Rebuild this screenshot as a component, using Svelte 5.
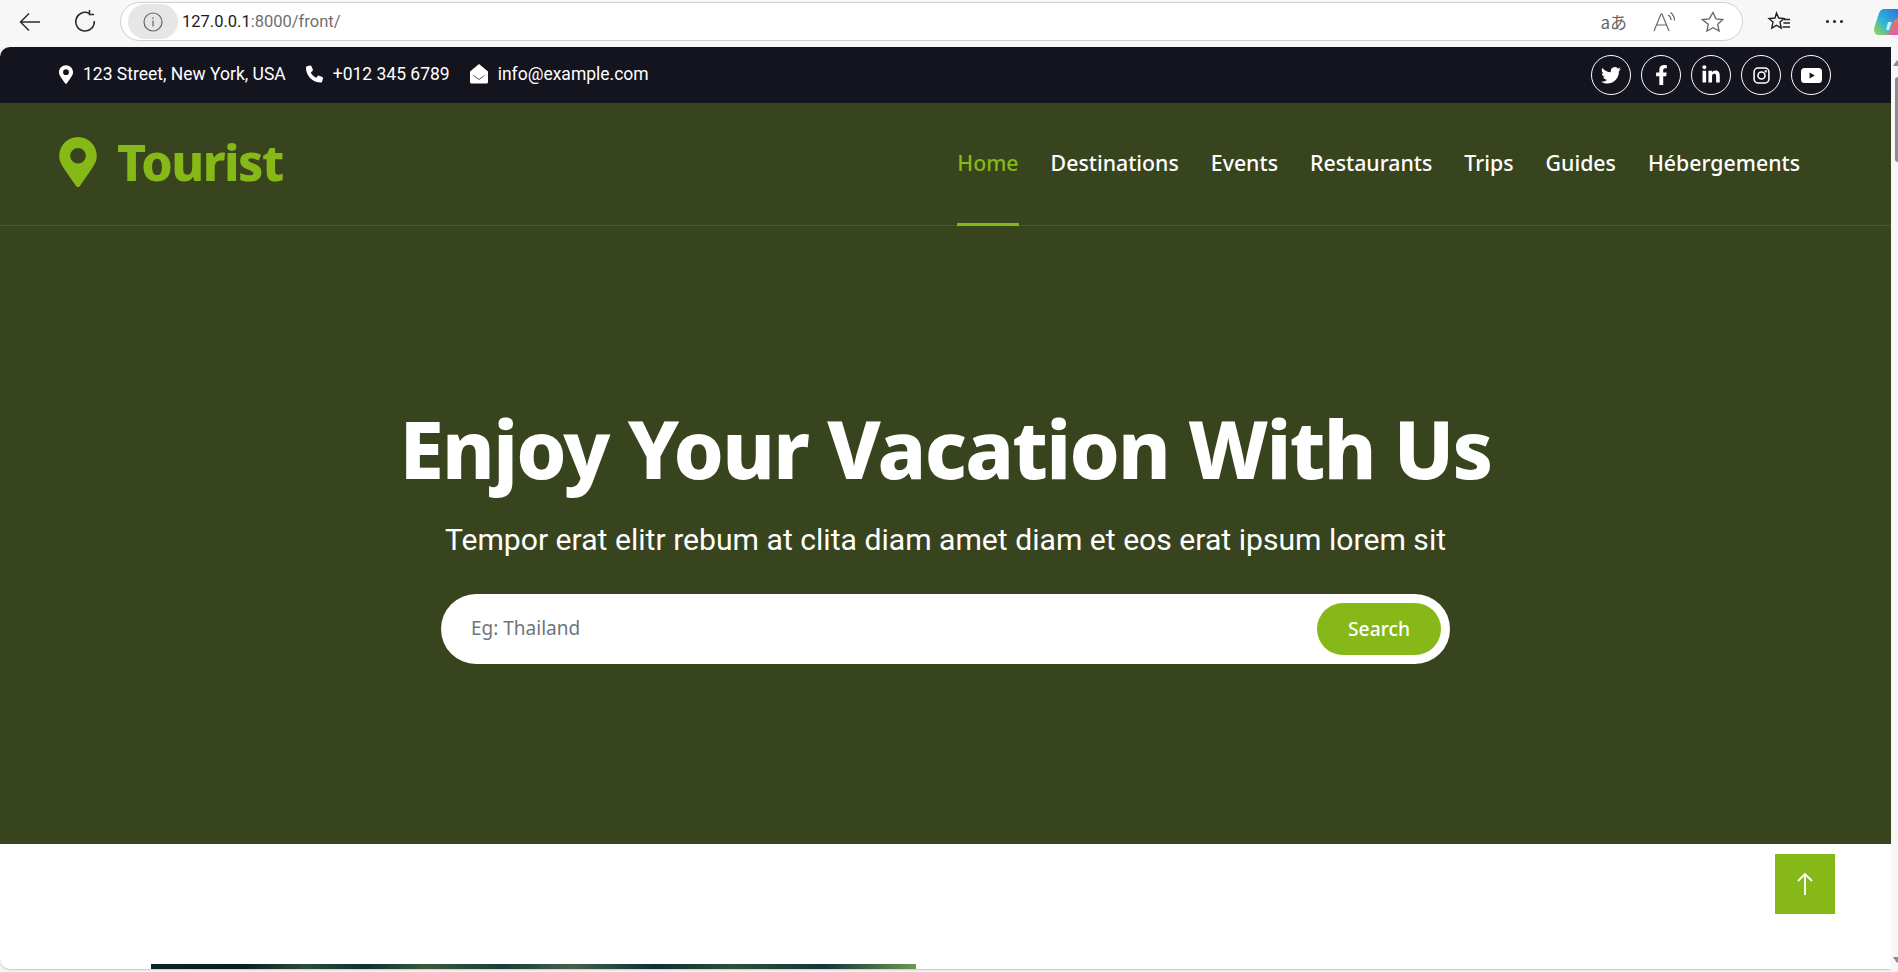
<script>
  const contact = [
    { icon: 'pin', text: '123 Street, New York, USA' },
    { icon: 'phone', text: '+012 345 6789' },
    { icon: 'mail', text: 'info@example.com' },
  ];
  const socials = ['twitter', 'facebook', 'linkedin', 'instagram', 'youtube'];
  const links = ['Home', 'Destinations', 'Events', 'Restaurants', 'Trips', 'Guides', 'Hébergements'];
</script>

<div class="window">
  <header class="chrome">
    <button class="tool back" aria-label="Back">
      <svg viewBox="0 0 24 24" width="24" height="24" fill="none" stroke="#2b2b2b" stroke-width="1.5"><path d="M22 12H3M11 3.500 2.500 12l8.500 8.500" /></svg>
    </button>
    <button class="tool reload" aria-label="Reload">
      <svg viewBox="0 0 24 24" width="24" height="24" fill="none" stroke="#2b2b2b" stroke-width="1.500"><path d="M16 3.300A9.300 9.300 0 1 0 21.300 11M16.500 0v4.500H21" /></svg>
    </button>
    <div class="address">
      <span class="site-info">
        <svg viewBox="0 0 20 20" width="20" height="20" fill="none" stroke="#666" stroke-width="1.200"><circle cx="10" cy="10" r="9" /><path d="M10 8.500v6M10 5.500v1.500" /></svg>
      </span>
      <span class="url"><span class="host">127.0.0.1</span>:8000/front/</span>
      <span class="addr-icons">
        <span class="translate">aあ</span>
        <svg viewBox="0 0 24 24" width="24" height="24" fill="none" stroke="#666" stroke-width="1.200"><path d="M2 21 9 4h1l7 17M5 15h9M16 5c2 1 3 3 3 5M18.500 2.500c2.500 2 4 4.500 4 8" /></svg>
        <svg viewBox="0 0 24 24" width="24" height="24" fill="none" stroke="#666" stroke-width="1.300"><path d="m12 2.500 2.900 6.300 6.900.8-5.100 4.700 1.400 6.800-6.100-3.400-6.100 3.400 1.400-6.800L1.300 9.600l6.900-.8z" /></svg>
      </span>
    </div>
    <div class="chrome-right">
      <svg viewBox="0 0 24 24" width="24" height="24" fill="none" stroke="#222" stroke-width="1.400"><path d="m9.500 3 2.200 5 5.300.5-4 3.600 1.200 5.900-4.700-2.700-4.700 2.700 1.200-5.900-4-3.600L8 8zM17 9.500h6M16.500 13H23M15.500 17H23" /></svg>
      <span class="dots"><i></i><i></i><i></i></span>
      <svg class="copilot" viewBox="0 0 24 26" width="24" height="26">
        <defs>
          <linearGradient id="cop-a" x1="0" y1="1" x2="1" y2="0"><stop offset="0" stop-color="#a6d63f" /><stop offset=".45" stop-color="#2fb6d8" /><stop offset="1" stop-color="#2f6fe0" /></linearGradient>
          <linearGradient id="cop-b" x1="0" y1="0" x2="1" y2="1"><stop offset="0" stop-color="#f6c344" /><stop offset=".5" stop-color="#f0705c" /><stop offset="1" stop-color="#d45cc8" /></linearGradient>
        </defs>
        <path d="M10 0h14v26H5c-4 0-6-4-4.500-8L5 4c1-2.500 3-4 5-4z" fill="url(#cop-a)" />
        <path d="M24 9v17H9c4 0 6-1.500 7-4l3-8c1-3 3-5 5-5z" fill="url(#cop-b)" />
        <path d="M14 13h4l-3 8h-3z" fill="#fff" opacity=".75" />
      </svg>
    </div>
  </header>

  <div class="viewport">
    <main class="page">
      <div class="topbar">
        <ul class="contact">
          {#each contact as c}
            <li>
              {#if c.icon === 'pin'}
                <svg viewBox="0 0 384 512" width="14" height="19" fill="#fff"><path d="M172 502C27 291 0 263 0 192 0 86 86 0 192 0s192 86 192 192c0 71-27 99-172 310-10 14-30 14-40 0zm20-230a80 80 0 1 0 0-160 80 80 0 0 0 0 160z" /></svg>
              {:else if c.icon === 'phone'}
                <svg viewBox="0 0 512 512" width="17" height="18" fill="#fff"><path d="M164 24c-8-18-27-28-46-23L30 25C13 30 0 46 0 64c0 247 201 448 448 448 18 0 34-13 39-30l24-88c5-19-5-39-23-46l-96-40c-16-7-35-2-46 12l-41 49c-70-33-127-90-160-160l49-40c14-11 18-30 12-46z" /></svg>
              {:else}
                <svg viewBox="0 0 18 20" width="18" height="20"><path fill="#fff" d="M0 7.500 9 0l9 7.500V18a1.500 1.500 0 0 1-1.500 1.500h-15A1.500 1.500 0 0 1 0 18z" /><path fill="none" stroke="#555" stroke-width="1" d="m3.500 11.500 5.500 4 5.500-4" /></svg>
              {/if}
              <span>{c.text}</span>
            </li>
          {/each}
        </ul>
        <div class="socials">
          {#each socials as s}
            <span class="social" aria-label={s}>
              {#if s === 'twitter'}
                <svg viewBox="0 0 24 24" width="20" height="20" fill="#fff"><path d="M23.900 4.900c-.9.400-1.800.7-2.800.8 1-.6 1.800-1.600 2.200-2.700-.9.600-2 1-3.100 1.200a4.900 4.900 0 0 0-8.400 4.500C7.700 8.500 4.100 6.500 1.700 3.500a4.900 4.900 0 0 0 1.500 6.600c-.8 0-1.600-.2-2.200-.6 0 2.400 1.700 4.400 3.900 4.900-.7.200-1.500.2-2.200.1.600 2 2.400 3.400 4.600 3.400A9.900 9.900 0 0 1 0 20c2.200 1.400 4.800 2.200 7.500 2.200 9.100 0 14.300-7.700 14-14.600 1-.7 1.800-1.600 2.400-2.700z" /></svg>
              {:else if s === 'facebook'}
                <svg viewBox="0 0 320 512" width="13" height="20" fill="#fff"><path d="m279 288 14-93h-89v-60c0-25 12-50 52-50h41V7s-37-7-72-7c-73 0-121 44-121 125v70H22v93h82v224h100V288z" /></svg>
              {:else if s === 'linkedin'}
                <svg viewBox="0 0 448 512" width="18" height="20" fill="#fff"><path d="M100 448H7V149h93zM54 108C24 108 0 83 0 53a54 54 0 0 1 107 0c0 30-24 55-53 55zm394 340h-93V302c0-35-1-79-48-79-49 0-56 38-56 77v148h-93V149h89v41h1c12-24 43-48 88-48 94 0 112 62 112 142z" /></svg>
              {:else if s === 'instagram'}
                <svg viewBox="0 0 24 24" width="17" height="17" fill="none" stroke="#fff" stroke-width="2.200"><rect x="1.500" y="1.500" width="21" height="21" rx="5.500" /><circle cx="12" cy="12" r="5" /><circle cx="18" cy="6" r=".6" fill="#fff" /></svg>
              {:else}
                <svg viewBox="0 0 24 17" width="21" height="15"><rect width="24" height="17" rx="4" fill="#fff" /><path d="m9.800 5 6 3.500-6 3.500z" fill="#14161f" /></svg>
              {/if}
            </span>
          {/each}
        </div>
      </div>

      <section class="hero">
        <nav class="navbar">
          <a class="brand" href="#top">
            <svg viewBox="0 0 384 512" width="38" height="50" fill="#86b817"><path d="M172 502C27 291 0 263 0 192 0 86 86 0 192 0s192 86 192 192c0 71-27 99-172 310-10 14-30 14-40 0zm20-230a80 80 0 1 0 0-160 80 80 0 0 0 0 160z" /></svg>
            <span>Tourist</span>
          </a>
          <div class="links">
            {#each links as l, i}
              <a href="#top" class:active={i === 0}>{l}</a>
            {/each}
          </div>
        </nav>
        <div class="hero-body">
          <h1>Enjoy Your Vacation With Us</h1>
          <p>Tempor erat elitr rebum at clita diam amet diam et eos erat ipsum lorem sit</p>
          <div class="search">
            <span class="placeholder">Eg: Thailand</span>
            <button>Search</button>
          </div>
        </div>
      </section>

      <div class="below">
        <div class="photo"></div>
        <button class="to-top" aria-label="Back to top">
          <svg viewBox="0 0 20 24" width="20" height="24" fill="none" stroke="#fff" stroke-width="1.800"><path d="M10 23V2M3 9l7-7 7 7" /></svg>
        </button>
      </div>
    </main>

    <aside class="scrollbar">
      <span class="arrow up"></span>
      <span class="thumb"></span>
      <span class="arrow down"></span>
    </aside>
  </div>
</div>

<style>
  :global(body) {
    margin: 0;
    background: #f5f5f5;
    overflow: hidden;
  }
  .window {
    width: 1898px;
    height: 972px;
    display: flex;
    flex-direction: column;
    font-family: Roboto, "Liberation Sans", sans-serif;
    overflow: hidden;
  }
  .chrome {
    height: 47px;
    flex: none;
    display: flex;
    align-items: flex-start;
    background: #f7f7f7;
    box-sizing: border-box;
    padding-top: 2px;
  }
  .tool {
    border: 0;
    background: none;
    padding: 0;
    width: 24px;
    height: 24px;
    margin-top: 8px;
  }
  .back { margin-left: 18px; }
  .reload { margin-left: 31px; }
  .address {
    margin-left: 23px;
    width: 1624px;
    height: 39px;
    box-sizing: border-box;
    border: 1px solid #cfcfcf;
    border-radius: 20px;
    background: #fff;
    display: flex;
    align-items: center;
    padding-left: 7px;
  }
  .site-info {
    width: 50px;
    height: 35px;
    border-radius: 18px;
    background: #e6e6e6;
    display: flex;
    align-items: center;
    justify-content: center;
  }
  .url {
    margin-left: 4px;
    font-size: 16.500px;
    color: #6f6f6f;
  }
  .host { color: #1a1a1a; }
  .addr-icons {
    margin-left: auto;
    display: flex;
    align-items: center;
    gap: 25px;
    padding-right: 17px;
  }
  .translate {
    font-family: "Noto Sans CJK JP", sans-serif;
    font-size: 17px;
    color: #666;
  }
  .chrome-right {
    display: flex;
    align-items: center;
    height: 39px;
    margin-left: 24px;
    flex: 1;
  }
  .dots {
    display: flex;
    gap: 4px;
    margin-left: 35px;
  }
  .dots i {
    width: 3px;
    height: 3px;
    border-radius: 50%;
    background: #222;
  }
  .copilot {
    margin-left: 31px;
    flex: none;
  }
  .viewport {
    flex: 1;
    display: flex;
    min-height: 0;
    padding-bottom: 3px;
  }
  .page {
    flex: 1;
    background: #fff;
    border-radius: 10px 0 0 10px;
    overflow: hidden;
    box-shadow: 0 1px 2px rgba(0, 0, 0, .2);
    display: flex;
    flex-direction: column;
  }
  .topbar {
    height: 56px;
    flex: none;
    background: #14141f;
    color: #fff;
    display: flex;
    align-items: center;
    justify-content: space-between;
    padding: 0 60px 0 59px;
  }
  .contact {
    display: flex;
    gap: 20px;
    list-style: none;
    margin: 0 0 2px;
    padding: 0;
    font-size: 17.500px;
  }
  .contact li {
    display: flex;
    align-items: center;
    gap: 10px;
  }
  .socials {
    display: flex;
    gap: 10px;
  }
  .social {
    width: 40px;
    height: 40px;
    box-sizing: border-box;
    border: 1px solid #fff;
    border-radius: 50%;
    display: flex;
    align-items: center;
    justify-content: center;
  }
  .hero {
    height: 741px;
    flex: none;
    background: #38441e;
    display: flex;
    flex-direction: column;
  }
  .navbar {
    height: 123px;
    flex: none;
    box-sizing: border-box;
    border-bottom: 1px solid #4c5834;
    display: flex;
    align-items: center;
    justify-content: space-between;
    padding: 0 91px 0 59px;
  }
  .brand {
    display: flex;
    align-items: center;
    gap: 20px;
    margin-bottom: 5px;
    text-decoration: none;
    color: #86b817;
    font-family: "Noto Sans", sans-serif;
    font-weight: 800;
    font-size: 50px;
    line-height: 60px;
    letter-spacing: -1.500px;
  }
  .links {
    display: flex;
    align-self: stretch;
    gap: 32px;
  }
  .links a {
    display: flex;
    align-items: center;
    position: relative;
    padding-bottom: 3px;
    color: #fff;
    text-decoration: none;
    font-family: "Noto Sans", sans-serif;
    font-weight: 500;
    font-size: 21.300px;
  }
  .links a.active { color: #86b817; }
  .links a.active::after {
    content: '';
    position: absolute;
    left: 0;
    right: 0;
    bottom: -1px;
    height: 3px;
    background: #86b817;
  }
  .hero-body {
    flex: 1;
    display: flex;
    flex-direction: column;
    align-items: center;
    padding-top: 174px;
  }
  h1 {
    margin: 0;
    color: #fff;
    font-family: "Noto Sans", sans-serif;
    font-weight: 800;
    font-size: 80px;
    line-height: 96px;
    letter-spacing: -1.700px;
  }
  p {
    margin: 24px 0 0;
    color: #fff;
    font-size: 30.150px;
    line-height: 40px;
  }
  .search {
    margin-top: 34px;
    width: 1009px;
    height: 70px;
    box-sizing: border-box;
    background: #fff;
    border-radius: 35px;
    display: flex;
    align-items: center;
    justify-content: space-between;
    padding: 0 9px 0 30px;
  }
  .placeholder {
    color: #6c757d;
    font-family: "Noto Sans", sans-serif;
    font-size: 19px;
    margin-bottom: 2px;
  }
  .search button {
    width: 124px;
    height: 52px;
    border: 0;
    border-radius: 26px;
    padding: 0 0 2px;
    background: #86b817;
    color: #fff;
    font-family: "Noto Sans", sans-serif;
    font-weight: 500;
    font-size: 19.300px;
  }
  .below {
    flex: 1;
    position: relative;
    min-height: 0;
  }
  .photo {
    position: absolute;
    left: 151px;
    top: 120px;
    width: 765px;
    height: 10px;
    background: linear-gradient(90deg, #0b2426, #06201f 12%, #2e4a3a 20%, #0f3030 28%, #3c5a3a 36%, #1a3c36 46%, #47614a 55%, #0c2f33 66%, #2c5238 76%, #143539 88%, #6b9a50);
  }
  .to-top {
    position: absolute;
    right: 56px;
    top: 10px;
    width: 60px;
    height: 60px;
    border: 0;
    background: #86b817;
    display: flex;
    align-items: center;
    justify-content: center;
    padding: 0;
  }
  .scrollbar {
    width: 7px;
    flex: none;
    background: #f7f7f7;
    position: relative;
  }
  .thumb {
    position: absolute;
    left: 4px;
    top: 30px;
    width: 6px;
    height: 85px;
    border-radius: 3px;
    background: #8c8c8c;
  }
  .arrow {
    position: absolute;
    left: 2px;
    width: 0;
    height: 0;
    border-left: 4px solid transparent;
    border-right: 4px solid transparent;
  }
  .arrow.up { top: 13px; border-bottom: 6px solid #8c8c8c; }
  .arrow.down { bottom: 6px; border-top: 6px solid #8c8c8c; }
</style>
